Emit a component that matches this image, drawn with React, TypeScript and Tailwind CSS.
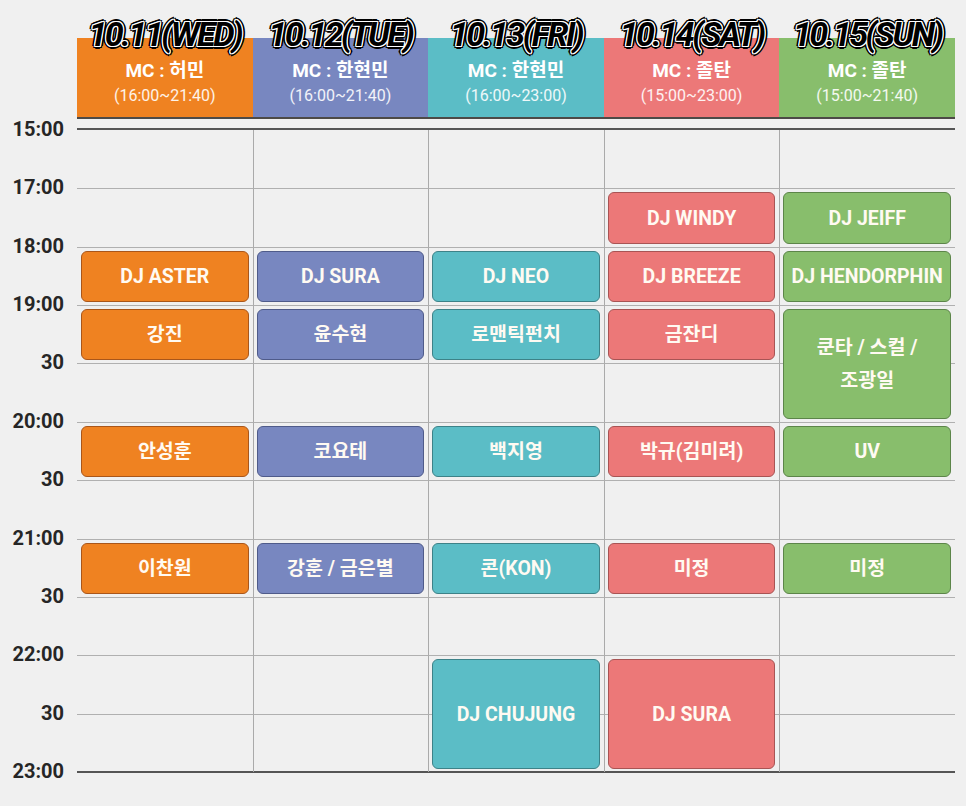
import React from 'react';

const days = [
  { title: '10.11(WED)', mc: 'MC : 허민', time: '(16:00~21:40)', bg: 'bg-[#ef8221]' },
  { title: '10.12(TUE)', mc: 'MC : 한현민', time: '(16:00~21:40)', bg: 'bg-[#7887c0]' },
  { title: '10.13(FRI)', mc: 'MC : 한현민', time: '(16:00~23:00)', bg: 'bg-[#5bbdc6]' },
  { title: '10.14(SAT)', mc: 'MC : 졸탄', time: '(15:00~23:00)', bg: 'bg-[#ec7878]' },
  { title: '10.15(SUN)', mc: 'MC : 졸탄', time: '(15:00~21:40)', bg: 'bg-[#88be6c]' },
];

const times = ['15:00', '17:00', '18:00', '19:00', '30', '20:00', '30', '21:00', '30', '22:00', '30', '23:00'];

const colStart = ['col-start-1', 'col-start-2', 'col-start-3', 'col-start-4', 'col-start-5'];
const rowStart = ['', 'row-start-1', 'row-start-2', 'row-start-3', 'row-start-4', 'row-start-5', 'row-start-6', 'row-start-7', 'row-start-8', 'row-start-9', 'row-start-10', 'row-start-11'];

const tone = [
  'bg-[#ef8221] border-[#a9561a]',
  'bg-[#7887c0] border-[#4f5b8a]',
  'bg-[#5bbdc6] border-[#3d8288]',
  'bg-[#ec7878] border-[#a85454]',
  'bg-[#88be6c] border-[#5c8549]',
];

// [column, row, span, label]
const slots: [number, number, number, string][] = [
  [0, 3, 1, 'DJ ASTER'],
  [0, 4, 1, '강진'],
  [0, 6, 1, '안성훈'],
  [0, 8, 1, '이찬원'],
  [1, 3, 1, 'DJ SURA'],
  [1, 4, 1, '윤수현'],
  [1, 6, 1, '코요테'],
  [1, 8, 1, '강훈 / 금은별'],
  [2, 3, 1, 'DJ NEO'],
  [2, 4, 1, '로맨틱펀치'],
  [2, 6, 1, '백지영'],
  [2, 8, 1, '콘(KON)'],
  [2, 10, 2, 'DJ CHUJUNG'],
  [3, 2, 1, 'DJ WINDY'],
  [3, 3, 1, 'DJ BREEZE'],
  [3, 4, 1, '금잔디'],
  [3, 6, 1, '박규(김미려)'],
  [3, 8, 1, '미정'],
  [3, 10, 2, 'DJ SURA'],
  [4, 2, 1, 'DJ JEIFF'],
  [4, 3, 1, 'DJ HENDORPHIN'],
  [4, 4, 2, '쿤타 / 스컬 /\n조광일'],
  [4, 6, 1, 'UV'],
  [4, 8, 1, '미정'],
];

const App = () => {
  return (
    <div className="w-[966px] h-[806px] bg-[#f0f0f0] font-['Roboto','Noto_Sans_CJK_KR',sans-serif] overflow-hidden">
      {/* Header */}
      <div className="flex pl-[77px] pt-[14px] w-[955px]">
        {days.map((d, i) => (
          <div key={i} className="flex-1 flex flex-col">
            <div className="relative z-10 -mb-[16px] h-[40px] flex items-center justify-center">
              <span className="font-['Roboto',sans-serif] italic font-bold text-[34px] tracking-[-2.5px] text-black [text-shadow:1px_0_0_#fff,-1px_0_0_#fff,0_1px_0_#fff,0_-1px_0_#fff,1px_1px_0_#fff,-1px_-1px_0_#fff,1px_-1px_0_#fff,-1px_1px_0_#fff,3px_0_0_#000,-3px_0_0_#000,0_3px_0_#000,0_-3px_0_#000,2px_2px_0_#000,-2px_-2px_0_#000,2px_-2px_0_#000,-2px_2px_0_#000]">
                {d.title}
              </span>
            </div>
            <div className={`${d.bg} h-[81px] border-b-2 border-[#4d4a47] flex flex-col items-center pt-[21px] text-white`}>
              <div className="font-bold text-[19px] leading-[24px]">{d.mc}</div>
              <div className="text-[16px] leading-[22px] mt-[2px] text-white/90">{d.time}</div>
            </div>
          </div>
        ))}
      </div>

      {/* Body */}
      <div className="flex mt-[10px]">
        <div className="w-[77px] flex flex-col">
          {times.map((t, i) => (
            <div key={i} className={i === times.length - 1 ? 'h-[24px]' : 'h-[58.36px]'}>
              <div className="-mt-[12px] h-[24px] w-[64px] text-right font-bold text-[20px] leading-[24px] text-[#262626]">{t}</div>
            </div>
          ))}
        </div>
        <div className="w-[878px] h-[645px] border-t-2 border-b-2 border-[#555] -mt-[1px] grid grid-cols-5 grid-rows-[repeat(11,58.36px)]">
          {Array.from({ length: 55 }).map((_, k) => {
            const c = k % 5;
            const r = Math.floor(k / 5) + 1;
            return (
              <div
                key={k}
                className={`${colStart[c]} ${rowStart[r]} ${r > 1 ? 'border-t border-[#b0b0b0]' : ''} ${c > 0 ? 'border-l border-l-[#aaa]' : ''}`}
              />
            );
          })}
          {slots.map(([c, r, span, label], k) => (
            <div
              key={'s' + k}
              className={`${colStart[c]} ${rowStart[r]} ${span === 2 ? 'row-span-2' : ''} px-[4px] pt-[4px] pb-[3px] flex`}
            >
              <div className={`${tone[c]} flex-1 border rounded-[6px] flex items-center justify-center text-center whitespace-pre-line text-[#fffaf2] font-bold text-[19.5px] leading-[33px]`}>
                {label}
              </div>
            </div>
          ))}
        </div>
      </div>
    </div>
  );
};

export default App;
